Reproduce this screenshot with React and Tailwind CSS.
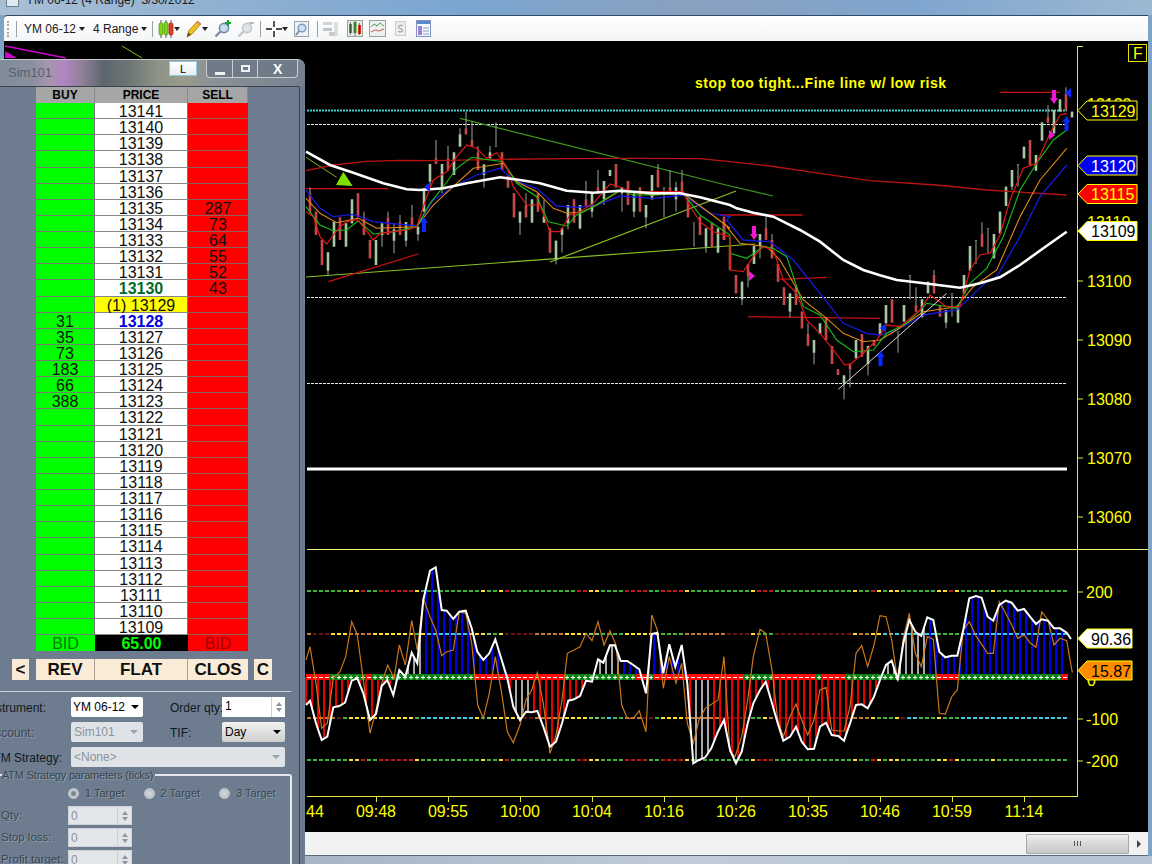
import React from 'react';

// chart drawing coordinates were read off 3x crops, so each helper maps a crop back to page pixels
const at = (bx, by) => (pts) => pts.map(([x, y]) => [bx + x / 3, by + y / 3]);
const z3 = at(300, 100);
const z4 = at(720, 40);
const z5 = at(300, 550);
const z6 = at(720, 550);
const line = (pts) => pts.map((p) => p.map((n) => n.toFixed(1)).join(',')).join(' ');

const candlesA = [
  [30,280,335,262,340,'r'],[48,335,405,335,405,'r'],[66,420,495,420,495,'r'],[84,457,512,457,525,'g'],[102,365,440,365,440,'g'],[120,352,420,352,420,'r'],[138,370,440,370,440,'g'],[156,298,370,298,370,'g'],[174,280,352,280,352,'r'],[192,352,405,335,405,'r'],[210,420,475,420,475,'r'],[228,420,495,420,495,'g'],[246,370,405,370,440,'g'],[264,352,405,335,405,'r'],[282,388,422,370,460,'g'],[300,366,405,345,405,'r'],[318,366,422,366,440,'g'],[336,352,380,315,380,'r'],[354,380,403,380,422,'g'],[372,265,335,265,335,'g'],[390,192,245,192,265,'g'],[408,175,192,120,192,'r'],[426,192,265,192,280,'g'],[444,175,212,138,212,'r'],[462,157,225,157,225,'g'],[480,103,140,85,140,'g'],[498,85,103,35,103,'r'],[516,120,140,65,140,'r'],[534,157,210,138,210,'r'],[552,193,225,193,263,'g'],[570,157,175,138,175,'g'],[588,138,139,67,140,'g'],[606,157,210,157,210,'r'],[624,228,263,228,263,'r'],[642,280,352,280,352,'r'],[660,335,368,335,405,'g'],[678,315,352,280,352,'r'],[696,298,368,298,368,'g'],[714,280,335,280,335,'r'],[732,350,368,298,368,'g'],[750,385,458,385,458,'r'],[768,422,478,422,493,'g'],[786,385,405,385,458,'g'],[804,315,370,315,388,'g'],[822,298,368,298,368,'r'],[840,315,386,315,386,'g'],[858,298,318,243,318,'r'],[876,280,335,280,352,'g'],[894,262,280,210,280,'r'],[912,243,298,243,315,'g'],[930,210,228,210,228,'g'],[948,192,262,192,262,'r'],[966,262,280,262,335,'g'],[984,243,315,243,315,'r'],[1002,280,335,280,352,'g'],[1020,262,335,262,335,'r'],[1038,315,352,315,385,'g'],[1056,225,298,225,298,'g'],[1074,210,262,192,262,'r'],[1092,262,263,262,352,'g'],[1110,262,280,210,280,'r'],[1128,262,298,245,335,'g'],[1146,245,280,210,280,'r'],[1164,298,352,298,352,'r'],[1182,368,369,368,440,'g'],[1200,350,405,350,405,'r'],[1218,385,440,385,458,'g'],[1236,368,440,368,440,'r'],[1254,385,458,385,458,'g'],[1272,368,420,368,420,'r'],
];
const candlesB = [
  [12,530,600,530,600,'r'],[30,618,690,618,690,'r'],[48,705,760,705,760,'r'],[66,725,778,725,795,'g'],[84,672,708,672,742,'r'],[102,618,672,618,672,'g'],[120,582,618,582,655,'g'],[138,565,600,530,600,'r'],[156,600,655,582,655,'r'],[174,672,725,672,725,'r'],[192,742,795,742,795,'r'],[210,760,815,760,833,'g'],[228,742,795,742,795,'r'],[246,815,865,815,865,'r'],[264,882,918,850,918,'r'],[282,900,938,900,973,'g'],[300,850,882,850,882,'g'],[318,832,900,832,900,'r'],[336,918,972,918,972,'r'],[354,988,1005,988,1005,'r'],[372,1006,1030,1006,1078,'g'],[390,973,988,973,1042,'r'],[408,900,955,900,955,'g'],[426,882,950,882,950,'r'],[444,918,972,918,1006,'g'],[462,900,918,900,918,'r'],[480,850,882,850,882,'g'],[498,795,850,795,850,'g'],[516,778,848,778,848,'r'],[534,875,876,875,938,'g'],[552,795,845,795,845,'g'],[570,705,706,705,778,'g'],[588,795,815,742,815,'r'],[606,778,832,778,832,'g'],[624,725,760,725,760,'g'],[642,705,760,690,760,'r'],[660,795,830,795,830,'r'],[678,810,848,810,865,'g'],[696,760,761,760,830,'g'],[714,795,848,795,848,'g'],[732,705,760,705,760,'g'],[750,618,692,618,692,'g'],[768,600,601,600,672,'g'],[786,582,620,547,620,'r'],[804,565,566,565,640,'g'],[822,582,655,582,655,'g'],[840,515,580,515,580,'g'],[858,440,498,440,498,'g'],[876,390,440,390,450,'g'],[894,372,373,372,440,'g'],[912,320,355,320,355,'g'],[930,300,375,300,375,'r'],[948,345,392,345,392,'g'],[966,247,302,247,302,'g'],[984,232,248,195,248,'r'],[1002,210,280,210,280,'g'],[1020,178,215,178,215,'g'],[1038,160,212,142,212,'r'],[1056,215,232,215,232,'g'],
];

const maWhite = [...z3([[18,155],[90,195],[160,218],[250,250],[320,268],[360,270],[430,265],[500,250],[600,232],[660,240],[720,250],[800,272],[880,278],[960,272],[1060,280],[1140,280],[1200,292],[1290,315]]), ...z4([[50,505],[100,518],[160,530],[240,570],[300,605],[370,660],[430,690],[480,706],[530,720],[600,728],[720,743],[780,730],[840,712],[900,675],[970,625],[1040,575]])];
const maRedLong = [...z3([[18,212],[100,195],[200,184],[300,181],[400,182],[600,178],[800,176],[1000,175],[1200,176],[1290,185]]), ...z4([[150,378],[300,400],[450,422],[650,435],[800,450],[1040,465]])];
const emaRed = [...z3([[18,335],[40,350],[60,410],[80,432],[100,405],[120,380],[140,365],[170,358],[195,385],[220,420],[240,400],[280,395],[320,390],[350,380],[380,290],[400,240],[440,215],[470,170],[500,135],[530,145],[560,175],[590,158],[620,200],[640,260],[680,315],[720,315],[750,395],[780,395],[810,345],[840,335],[880,310],[930,252],[960,262],[1000,275],[1060,275],[1150,275],[1165,310],[1200,365],[1240,395],[1290,410]]), ...z4([[30,690],[70,695],[100,650],[130,620],[160,630],[190,720],[230,760],[260,840],[300,880],[340,930],[375,975],[395,970],[430,940],[470,900],[500,855],[540,860],[600,810],[630,765],[680,800],[720,800],[750,690],[780,645],[810,640],[840,585],[870,480],[910,385],[950,370],[990,280],[1020,225],[1040,220]])];
const emaGreen = [...z3([[18,320],[60,375],[100,392],[140,390],[175,362],[220,402],[280,395],[350,380],[390,310],[430,260],[470,205],[515,172],[570,180],[610,185],[650,250],[710,290],[745,365],[800,378],[830,345],[880,320],[960,270],[1000,285],[1060,285],[1150,280],[1200,345],[1290,405]]), ...z4([[30,640],[80,655],[130,620],[160,625],[200,650],[250,800],[300,825],[350,900],[400,935],[460,930],[500,880],[560,850],[620,790],[710,805],[750,730],[800,685],[850,590],[900,450],[950,370],[1000,300],[1040,270]])];
const emaOrange = [...z3([[18,295],[60,340],[110,368],[175,355],[230,385],[350,380],[400,315],[470,250],[520,205],[580,195],[610,190],[650,245],[710,275],[760,325],[800,340],[850,335],[890,315],[960,272],[1060,285],[1150,280],[1210,325],[1290,385]]), ...z4([[20,560],[60,610],[140,620],[180,660],[250,780],[320,835],[370,880],[430,905],[480,900],[530,870],[610,815],[710,800],[760,740],[830,690],[900,530],[960,420],[1040,325]])];
const emaBlue = [...z3([[18,270],[60,325],[100,350],[160,343],[220,365],[350,378],[400,300],[470,255],[530,225],[600,205],[640,240],[710,265],[770,318],[830,322],[890,315],[960,288],[1060,295],[1150,285],[1230,340],[1290,350]]), ...z4([[20,540],[70,600],[150,605],[220,660],[300,760],[370,850],[440,880],[480,885],[530,870],[610,825],[710,810],[800,725],[830,710],[900,590],[960,470],[1040,375]])];

const cci = [...z5([[18,465],[30,452],[48,520],[65,570],[82,560],[100,472],[118,468],[135,458],[155,392],[172,385],[190,430],[210,510],[228,492],[245,408],[262,390],[280,435],[298,360],[316,380],[335,308],[352,340],[370,150],[390,62],[407,52],[425,180],[440,182],[460,207],[478,185],[497,182],[515,235],[532,305],[550,330],[568,310],[586,268],[605,330],[622,385],[640,470],[660,510],[678,485],[695,487],[712,483],[730,530],[750,590],[768,575],[786,520],[805,452],[822,448],[840,438],[858,392],[876,395],[894,328],[910,338],[930,286],[945,286],[962,333],[982,333],[1000,345],[1018,358],[1038,430],[1055,252],[1072,248],[1090,370],[1108,283],[1126,350],[1145,285],[1162,400],[1180,640],[1197,630],[1216,622],[1234,595],[1254,545],[1272,510]]), ...z6([[30,600],[48,640],[65,605],[83,520],[100,460],[120,420],[137,395],[156,460],[173,520],[190,572],[210,560],[228,530],[245,575],[263,598],[282,596],[300,530],[318,518],[335,555],[355,558],[372,572],[390,520],[408,465],[425,463],[443,475],[462,440],[480,390],[498,345],[515,332],[533,390],[550,280],[568,210],[586,245],[604,258],[622,202],[640,210],[658,305],[676,322],[695,317],[712,317],[730,240],[748,145],[768,138],[785,143],[803,200],[820,212],[838,165],[857,152],[875,158],[893,182],[912,177],[930,200],[948,222],[965,208],[984,212],[1002,235],[1020,235],[1040,248],[1053,267]])];
const cciSlow = [...z5([[18,330],[30,290],[48,400],[65,535],[82,520],[100,385],[120,365],[137,320],[155,215],[172,255],[190,390],[210,550],[228,480],[245,400],[263,345],[282,385],[298,285],[316,345],[335,212],[352,300],[370,145],[390,200],[407,240],[425,317],[440,305],[460,300],[478,185],[497,190],[515,280],[533,465],[550,505],[568,430],[586,320],[605,430],[622,545],[640,578],[660,525],[678,450],[695,420],[712,368],[730,460],[750,610],[768,555],[786,450],[802,310],[822,300],[840,290],[858,250],[876,272],[894,215],[912,285],[930,242],[948,285],[965,465],[982,505],[1000,505],[1018,482],[1038,545],[1055,195],[1072,240],[1090,415],[1108,320],[1128,400],[1145,340],[1162,520],[1180,580],[1197,510],[1216,475],[1254,450],[1272,320]]), ...z6([[30,605],[45,620],[65,560],[83,450],[100,320],[120,238],[137,250],[156,360],[173,510],[190,560],[210,500],[228,462],[245,510],[263,555],[282,510],[300,420],[318,412],[335,540],[355,543],[372,543],[390,470],[408,310],[425,287],[443,350],[462,285],[480,197],[498,200],[515,270],[533,395],[550,265],[568,190],[586,310],[604,350],[622,260],[640,268],[658,490],[676,492],[695,440],[712,420],[730,240],[748,215],[768,258],[785,283],[803,310],[820,310],[838,155],[857,190],[875,225],[893,265],[912,255],[930,278],[948,292],[965,185],[984,210],[1002,285],[1020,265],[1040,272],[1057,368]])];

const G = '#3cb43c', Y = '#ffe030', R = '#c01818', O = '#c87830', D = '#6a1010', C = '#40c8e0', L = '#80c880';
const r5 = (arr) => arr.map(([e, c]) => [300 + e / 3, c]);
const r6 = (arr) => arr.map(([e, c]) => [720 + e / 3, c]);
const run200 = [...r5([[145,G],[180,Y],[200,R],[235,G],[340,R],[360,Y],[545,G],[560,Y],[595,G],[612,Y],[630,R],[830,G],[865,R],[900,Y],[975,G],[1045,R],[1080,G],[1155,R],[1170,Y],[1260,G]]), ...r6([[92,G],[110,Y],[162,R],[398,G],[415,Y],[452,G],[470,R],[488,Y],[505,G],[540,Y],[650,G],[685,Y],[703,R],[720,Y],[810,G],[828,Y],[1070,G]])];
const run100 = [...r5([[40,O],[90,D],[150,Y],[220,O],[340,Y],[360,G],[375,Y],[510,C],[560,Y],[580,L],[600,G],[615,Y],[700,D],[790,O],[860,Y],[900,L],[980,G],[1080,Y],[1150,G],[1260,O]]), ...r6([[15,O],[90,D],[110,Y],[165,G],[398,D],[420,Y],[450,O],[490,Y],[650,C],[720,G],[1070,C]])];
const runM100 = [...r5([[100,O],[130,D],[150,G],[340,Y],[360,G],[520,C],[535,Y],[560,G],[580,L],[660,Y],[700,D],[800,O],[870,Y],[900,L],[920,G],[940,C],[975,G],[1035,O],[1060,D],[1080,G],[1160,Y],[1260,O]]), ...r6([[90,D],[130,G],[145,Y],[165,O],[400,D],[450,O],[470,Y],[520,G],[540,Y],[560,D],[600,C],[650,G],[668,Y],[720,G],[1070,C]])];
const zeroRuns = [...r5([[90,'r'],[200,'g'],[218,'r'],[522,'g'],[795,'r'],[1010,'g'],[1040,'r'],[1060,'g'],[1260,'r']]), ...r6([[72,'r'],[160,'g'],[288,'r'],[305,'g'],[378,'r'],[648,'g'],[720,'r'],[1026,'g'],[1070,'r']])];

const ticks = [];
for (let x = 307; x < 1065; x += 6) ticks.push(x);
const runAt = (runs, x) => (runs.find((r) => r[0] > x + 2) || runs[runs.length - 1])[1];

const cciY = (x) => {
  for (let i = 0; i < cci.length - 1; i++) {
    const [x0, y0] = cci[i];
    const [x1, y1] = cci[i + 1];
    if (x >= x0 && x <= x1) return y0 + ((y1 - y0) * (x - x0)) / (x1 - x0);
  }
  return 677;
};
const inRange = (x, list) => list.some(([a, b]) => x >= a && x < b);
const barColor = (x, y) => {
  if (inRange(x, [[421, 425], [529, 533], [619, 623], [709, 713], [925, 929]])) return '#ffff00';
  if (y < 677) return inRange(x, [[405, 421], [597, 619], [888, 925]]) ? '#a8a8a8' : '#0000e6';
  return inRange(x, [[511, 529], [691, 709]]) ? '#a8a8a8' : '#e60000';
};
const bars = [];
for (let x = 306; x < 1068; x += 6) bars.push(x);

function DashRow({ y, runs }) {
  return (
    <g>
      {ticks.map((x) => (
        <rect key={x} x={x} y={y - 1} width="4" height="2" fill={runAt(runs, x)} />
      ))}
    </g>
  );
}

function Tag({ y, w = 50, fill, color, label }) {
  const h = 9.5;
  const x = 1087;
  return (
    <g>
      <polygon points={`1078,${y} ${x},${y - h} ${x + w},${y - h} ${x + w},${y + h} ${x},${y + h}`} fill={fill} stroke="#ffff00" strokeWidth="1" />
      <text x={x + 4} y={y + 6} fontSize="16" fill={color}>{label}</text>
    </g>
  );
}

function Chart() {
  const axis = [[13100, 281], [13090, 340], [13080, 399], [13070, 458], [13060, 517]];
  const times = [[376, '09:48'], [448, '09:55'], [520, '10:00'], [592, '10:04'], [664, '10:16'], [736, '10:26'], [808, '10:35'], [880, '10:46'], [952, '10:59'], [1024, '11:14']];
  const indic = [[592, '200'], [719, '-100'], [761, '-200']];
  const up = (x, y) => `${x},${y - 8} ${x + 4},${y - 2} ${x + 2},${y - 2} ${x + 2},${y + 7} ${x - 2},${y + 7} ${x - 2},${y - 2} ${x - 4},${y - 2}`;
  const down = (x, y) => `${x},${y + 7} ${x + 4},${y + 1} ${x + 2},${y + 1} ${x + 2},${y - 7} ${x - 2},${y - 7} ${x - 2},${y + 1} ${x - 4},${y + 1}`;

  return (
    <svg className="block w-[1144px] h-[791px] bg-black" viewBox="4 41 1144 791">
      {/* stray drawing objects behind the order window */}
      <line x1="5" y1="46" x2="66" y2="58" stroke="#d000d0" strokeWidth="1.5" />
      <polygon points="5,51 17,58 5,58" fill="#d000d0" />
      <line x1="122" y1="46" x2="142" y2="58" stroke="#7fc020" />

      <line x1="307" y1="110.5" x2="1067" y2="110.5" stroke="#40d0d0" strokeWidth="2" strokeDasharray="2 1" />
      {[124.5, 297.5, 383.5].map((y) => (
        <line key={y} x1="307" y1={y} x2="1067" y2={y} stroke="#e8e8e8" strokeDasharray="3 1" />
      ))}
      <line x1="307" y1="469" x2="1067" y2="469" stroke="#fff" strokeWidth="3" />

      <polyline points={line(z3([[18,172],[110,232]]))} stroke="#80b020" fill="none" />
      <polyline points={line(z3([[480,55],[1290,258]]))} stroke="#3f9a20" fill="none" strokeWidth="1.2" />
      <polyline points={line([[306, 277], [755, 244]])} stroke="#88c020" fill="none" strokeWidth="1.2" />
      <polyline points={line([[550, 262], [736, 191]])} stroke="#88c020" fill="none" strokeWidth="1.2" />
      <polyline points={line([[730, 186], [773, 196]])} stroke="#3f9a20" fill="none" strokeWidth="1.2" />
      <polygon points={line(z3([[108,255],[130,215],[158,258]]))} fill="#7de000" />

      {[[[18,266],[265,266]], [[85,545],[355,462]]].map((p, i) => (
        <polyline key={i} points={line(z3(p))} stroke="#c81010" fill="none" strokeWidth="1.3" />
      ))}
      {[[[840,157],[1020,157]], [[0,525],[248,525]], [[180,718],[320,712]], [[85,830],[480,835]]].map((p, i) => (
        <polyline key={i} points={line(z4(p))} stroke="#c81010" fill="none" strokeWidth="1.3" />
      ))}

      {[...candlesA.map((c) => [300 + c[0] / 3, ...c.slice(1, 5).map((v) => 100 + v / 3), c[5]]), ...candlesB.map((c) => [720 + c[0] / 3, ...c.slice(1, 5).map((v) => 40 + v / 3), c[5]])].map(([x, t, b, wt, wb, k], i) => (
        <g key={i}>
          <line x1={x} y1={wt} x2={x} y2={wb} stroke="#9aa89a" />
          <rect x={x - 1.3} y={t} width="2.6" height={b - t} fill={k === 'r' ? '#c84848' : '#a8c8a4'} />
        </g>
      ))}

      <polyline points={line(maRedLong)} stroke="#b81414" strokeWidth="1.3" fill="none" />
      <polyline points={line(emaBlue)} stroke="#1818e0" strokeWidth="1.3" fill="none" />
      <polyline points={line(emaOrange)} stroke="#e08a18" strokeWidth="1.1" fill="none" />
      <polyline points={line(emaGreen)} stroke="#18c018" strokeWidth="1.1" fill="none" />
      <polyline points={line(emaRed)} stroke="#e01818" strokeWidth="1.2" fill="none" />
      <polyline points={line(maWhite)} stroke="#fff" strokeWidth="2.6" fill="none" />
      <polyline points={line(z4([[355,1048],[680,760]]))} stroke="#d8d8d8" fill="none" />

      <polygon points={up(424, 225)} fill="#0a28ff" />
      <polygon points={up(880.5, 359)} fill="#0a28ff" />
      <polygon points={up(1066.5, 124)} fill="#0a28ff" />
      <polygon points="424,187 430,182 430,192" fill="#0a28ff" />
      <polygon points="880,328 886,323 886,333" fill="#0a28ff" />
      <polygon points="1065,93 1071,88 1071,98" fill="#0a28ff" />
      <polygon points={down(754, 233)} fill="#f018d0" />
      <polygon points={down(1054, 97)} fill="#f018d0" />
      <polygon points="749,271 755,276 749,281" fill="#f018d0" />
      <polygon points="1049,130 1055,135 1049,140" fill="#f018d0" />

      <text x="695" y="88" fontSize="14" fontWeight="700" fill="#ffff00" letterSpacing="0.5">stop too tight...Fine line w/ low risk</text>

      {/* price axis */}
      <polyline points="1083,46.5 1077.5,46.5 1077.5,797" stroke="#e8e840" fill="none" />
      <rect x="1128.5" y="44.5" width="18" height="17" fill="none" stroke="#e8e000" />
      <text x="1133" y="59" fontSize="16" fill="#ffff00">F</text>
      {axis.map(([p, y]) => (
        <g key={p}>
          <line x1="1077" y1={y} x2="1083" y2={y} stroke="#e8e840" />
          <text x="1087" y={y + 6} fontSize="16" fill="#ffff00">{p}</text>
        </g>
      ))}
      <text x="1087" y="110" fontSize="16" fill="#ffff00">13130</text>
      <text x="1087" y="228" fontSize="16" fill="#ffff00">13110</text>
      <Tag y={110.5} fill="#000" color="#ffff00" label="13129" />
      <Tag y={165.5} fill="#0000f0" color="#fff" label="13120" />
      <Tag y={194} fill="#ff0000" color="#ffff00" label="13115" />
      <Tag y={231} fill="#fff" color="#000" label="13109" />

      {/* CCI panel */}
      <line x1="307" y1="549.5" x2="1148" y2="549.5" stroke="#f0f070" />
      {bars.map((x) => {
        const y = cciY(x);
        return <rect key={x} x={x - 1} y={Math.min(y, 677)} width="2" height={Math.abs(y - 677)} fill={barColor(x, y)} />;
      })}
      <DashRow y={591} runs={run200} />
      <DashRow y={634} runs={run100} />
      <DashRow y={718} runs={runM100} />
      <DashRow y={760} runs={run200} />
      {ticks.map((x) => (
        <rect key={x} x={x - 1} y="674" width="6" height="6" fill={runAt(zeroRuns, x) === 'g' ? '#0a8010' : '#ff0808'} />
      ))}
      {ticks.map((x) =>
        runAt(zeroRuns, x) === 'g' ? (
          <path key={x} d={`M${x} 677.5h4M${x + 2} 675.5v4`} stroke="#fff" strokeWidth="1" fill="none" />
        ) : (
          <rect key={x} x={x} y="677" width="4" height="1" fill="#fff" />
        )
      )}
      <polyline points={line(cciSlow)} stroke="#c8761e" strokeWidth="1.2" fill="none" />
      <polyline points={line(cci)} stroke="#fff" strokeWidth="2" fill="none" />

      {indic.map(([y, t]) => (
        <g key={t}>
          <line x1="1077" y1={y} x2="1083" y2={y} stroke="#e8e840" />
          <text x="1086" y={y + 6} fontSize="16" fill="#ffff00">{t}</text>
        </g>
      ))}
      <text x="1087" y="686" fontSize="16" fill="#ffff00">0</text>
      <Tag y={638.5} w={45} fill="#fff" color="#000" label="90.36" />
      <Tag y={670.5} w={45} fill="#ff8c00" color="#000" label="15.87" />

      {/* time axis */}
      <line x1="307" y1="796.5" x2="1077" y2="796.5" stroke="#e8e840" />
      <text x="306" y="817" fontSize="16" fill="#ffff00">44</text>
      {times.map(([x, t]) => (
        <g key={t}>
          <line x1={x + 0.5} y1="797" x2={x + 0.5} y2="802" stroke="#e8e840" />
          <text x={x} y="817" fontSize="16" fill="#ffff00" textAnchor="middle">{t}</text>
        </g>
      ))}
    </svg>
  );
}

function Caret({ className = '' }) {
  return <span className={`inline-block w-0 h-0 border-x-[3.5px] border-x-transparent border-t-[4px] border-t-[#222] ${className}`} />;
}

function Sep() {
  return <span className="block w-px h-[16px] bg-[#9aa0a6]" />;
}

function Glass({ dim, plus, minus }) {
  return (
    <svg width="17" height="18" viewBox="0 0 17 18">
      <circle cx="10" cy="8" r="4.6" fill={dim ? '#dfe3e6' : '#c8dcee'} stroke={dim ? '#c4c8cc' : '#6f8fb0'} strokeWidth="1.6" />
      <line x1="6.5" y1="11.5" x2="1.5" y2="16.5" stroke={dim ? '#c0c4c8' : '#7f8ea0'} strokeWidth="2.4" />
      {plus && <path d="M14 0v6M11 3h6" stroke="#1aa030" strokeWidth="2" />}
      {minus && <path d="M12 3h5" stroke="#b8bcc0" strokeWidth="2" />}
    </svg>
  );
}

function Toolbar() {
  return (
    <div className="h-[26px] ml-[4px] mr-[4px] border-t border-t-[#2f4a66] bg-[linear-gradient(#ffffff,#f4f5f6)] flex items-center text-[12px] text-[#1a1a1a] rounded-tl-sm shrink-0">
      <span className="ml-[3px] w-[2px] h-[16px] border-l-2 border-dotted border-[#aaa]" />
      <span className="ml-[7px]"><Sep /></span>
      <span className="ml-[7px] w-[50px] whitespace-nowrap">YM 06-12</span>
      <Caret className="ml-[5px]" />
      <span className="ml-[8px] w-[43px] whitespace-nowrap">4 Range</span>
      <Caret className="ml-[5px]" />
      <span className="ml-[5px]"><Sep /></span>

      <svg className="ml-[5px]" width="16" height="20" viewBox="0 0 16 20">
        <path d="M3 1v18M8 1v18M13 1v18" stroke="#333" strokeWidth="0.8" />
        <rect x="1" y="4" width="4" height="12" rx="1.6" fill="#7ed321" stroke="#4a8a10" strokeWidth="0.7" />
        <rect x="6" y="3" width="4" height="13" rx="1.6" fill="#7ed321" stroke="#4a8a10" strokeWidth="0.7" />
        <rect x="11" y="4" width="4" height="12" rx="1.6" fill="#e04020" stroke="#902010" strokeWidth="0.7" />
      </svg>
      <Caret />

      <svg className="ml-[6px]" width="16" height="18" viewBox="0 0 16 18">
        <polygon points="1,17 2.5,11 11.5,1 15,4 6,14" fill="#f0c020" stroke="#a07810" strokeWidth="0.8" />
        <polygon points="11.5,1 15,4 13.4,5.8 10,2.8" fill="#e08a70" />
        <polygon points="1,17 2.5,12.5 5,14.8" fill="#5a4a20" />
      </svg>
      <Caret />
      <span className="ml-[6px] flex"><Glass plus /></span>
      <span className="ml-[6px] flex"><Glass dim minus /></span>
      <span className="ml-[6px]"><Sep /></span>

      <svg className="ml-[5px]" width="16" height="16" viewBox="0 0 16 16">
        <path d="M8 0v6M8 10v6M0 8h6M10 8h6" stroke="#111" strokeWidth="1.4" />
      </svg>
      <Caret />
      <svg className="ml-[6px]" width="15" height="16" viewBox="0 0 15 16">
        <rect x="0.5" y="0.5" width="14" height="15" fill="#eef2f6" stroke="#9aa4ae" />
        <circle cx="8" cy="7" r="3.8" fill="#cfe0f0" stroke="#7f9ab8" strokeWidth="1.4" />
        <line x1="5" y1="10" x2="2" y2="14" stroke="#7f8ea0" strokeWidth="2" />
      </svg>
      <span className="ml-[8px]"><Sep /></span>

      <svg className="ml-[5px]" width="16" height="16" viewBox="0 0 16 16">
        <rect x="0" y="1" width="9" height="3" fill="#d0d4d8" />
        <rect x="0" y="7" width="9" height="3" fill="#c0c4c8" />
        <rect x="11" y="1" width="4" height="14" fill="#dcdfe2" />
        <rect x="6" y="11" width="6" height="4" fill="#c8ccd0" />
      </svg>
      <svg className="ml-[8px]" width="16" height="17" viewBox="0 0 16 17">
        <rect x="0.5" y="0.5" width="15" height="16" fill="#e8ece8" stroke="#9aa49a" />
        <rect x="2" y="4" width="3" height="9" fill="#40a030" />
        <rect x="6.5" y="2" width="3" height="11" fill="#40a030" />
        <rect x="11" y="5" width="3" height="9" fill="#d03020" />
        <path d="M3.5 2v13M8 1v15M12.5 3v12" stroke="#333" strokeWidth="0.6" />
      </svg>
      <svg className="ml-[6px]" width="17" height="17" viewBox="0 0 17 17">
        <rect x="0.5" y="0.5" width="16" height="16" fill="#eef0ee" stroke="#9aa49a" />
        <path d="M2 7l3-3 3 2 3-3 4 3" stroke="#50a060" fill="none" />
        <path d="M2 12l4-2 4 1 5-2" stroke="#c06060" fill="none" />
      </svg>
      <svg className="ml-[9px]" width="11" height="15" viewBox="0 0 11 15">
        <rect x="0.5" y="0.5" width="10" height="14" fill="#eceeee" stroke="#c8ccd0" />
        <path d="M7.5 5C6.5 3.8 3.5 4 3.5 5.8S7.5 7.6 7.5 9.4 4.5 11.4 3.5 10" stroke="#a8acb0" strokeWidth="1.3" fill="none" />
      </svg>
      <svg className="ml-[10px]" width="15" height="17" viewBox="0 0 15 17">
        <rect x="0.5" y="0.5" width="14" height="16" fill="#f4f6fa" stroke="#7f94c0" />
        <rect x="1" y="1" width="13" height="3" fill="#5a8ac8" />
        <rect x="2" y="6" width="4" height="9" fill="#a080d8" />
        <path d="M7 8h6M7 11h6M7 14h6" stroke="#8aa0c8" />
      </svg>
    </div>
  );
}

const prices = [];
for (let p = 13141; p >= 13109; p--) prices.push(p);
const sells = { 13135: 287, 13134: 73, 13133: 64, 13132: 55, 13131: 52, 13130: 43 };
const buys = { 13128: 31, 13127: 35, 13126: 73, 13125: 183, 13124: 66, 13123: 388 };

function Ladder() {
  return (
    <div className="ml-[36px] w-[212px] grid grid-cols-[59px_93px_60px] text-[16px] leading-[17px] text-center text-[#101010]">
      {['BUY', 'PRICE', 'SELL'].map((h) => (
        <div key={h} className="h-[16px] bg-[#a6a6a6] font-bold text-[12px] leading-[16px] text-black border-r border-r-[#8a8a8a]">{h}</div>
      ))}
      {prices.map((p) => (
        <React.Fragment key={p}>
          <div className="h-[16.125px] bg-[#00ff00] border-b border-b-[#707f70] border-r border-r-[#777]">{buys[p]}</div>
          <div
            className={`h-[16.125px] border-b border-b-[#888] border-r border-r-[#777] ${p === 13129 ? 'bg-[#ffff00]' : 'bg-white'} ${p === 13130 ? 'font-bold text-[#006b2a]' : ''} ${p === 13128 ? 'font-bold text-[#0000e0]' : ''}`}
          >
            {p === 13129 ? `(1) ${p}` : p}
          </div>
          <div className="h-[16.125px] bg-[#ff0000] border-b border-b-[#8f5f5f]">{sells[p]}</div>
        </React.Fragment>
      ))}
      <div className="h-[16px] bg-[#00ff00] text-[#0a7a0a]">BID</div>
      <div className="h-[16px] bg-black text-[#00ff00] font-bold">65.00</div>
      <div className="h-[16px] bg-[#ff0000] text-[#a00000]">BID</div>
    </div>
  );
}

function Spinner() {
  return (
    <span className="ml-auto w-[14px] h-full flex flex-col items-center justify-center gap-[2px] border-l border-l-[#ccd0d4]">
      <span className="w-0 h-0 border-x-[3px] border-x-transparent border-b-[4px] border-b-[#8a96a2]" />
      <span className="w-0 h-0 border-x-[3px] border-x-transparent border-t-[4px] border-t-[#8a96a2]" />
    </span>
  );
}

function DimText({ children, className = '' }) {
  return <span className={`[text-shadow:1px_1px_0_#8f9dab] text-[#3a4550] ${className}`}>{children}</span>;
}

function FormLabel({ w, children, dim }) {
  return (
    <div className={`shrink-0 text-right whitespace-nowrap leading-[22px] text-[12px] ${w} ${dim ? 'text-[#3a4550] [text-shadow:1px_1px_0_#8f9dab]' : 'text-[#10181f]'}`}>
      <div className="float-right">{children}</div>
    </div>
  );
}

function Radio({ on, label, className }) {
  return (
    <span className={`flex items-center gap-[6px] text-[11px] ${className}`}>
      <span className="w-[11px] h-[11px] rounded-full bg-[radial-gradient(circle,#d8dce0,#aeb4ba)] border border-[#c8cdd2] flex items-center justify-center">
        {on && <span className="w-[5px] h-[5px] rounded-full bg-[#7c848c]" />}
      </span>
      <DimText>{label}</DimText>
    </span>
  );
}

function Numeric({ label }) {
  return (
    <div className="flex h-[19px] items-center">
      <DimText className="w-[68px] pl-px whitespace-nowrap text-[11.5px]">{label}</DimText>
      <div className="w-[64px] h-[19px] bg-[#e2e6e9] border border-[#d0d4d8] flex items-center pl-[2px] text-[#8a939c] text-[12px] leading-none">
        0
        <Spinner />
      </div>
    </div>
  );
}

function OrderWindow() {
  return (
    <section className="absolute left-0 top-[59px] w-[305px] h-[805px] overflow-hidden rounded-tr-[8px] bg-[#6d7d8f] border-t border-t-[#c8ccd0] text-[12px]">
      <header className="h-[26px] flex items-start bg-[linear-gradient(90deg,#7f8c99_0%,#8a8f9e_10%,#a795ae_16%,#b185c4_21%,#8f8098_27%,#5d666e_34%,#6c7574_42%,#8f9488_52%,#9a9c88_60%,#8d9397_68%,#75828e_100%)]">
        <span className="ml-[8px] mt-[6px] text-[13px] leading-[14px] text-[#56616b]">Sim101</span>
        <button className="ml-[117px] mt-px w-[28px] h-[15px] bg-[linear-gradient(#ffffff,#e8eef4)] border border-[#8fc8e8] text-[11px] leading-[12px] text-black">L</button>
        <div className="ml-[9px] w-[92px] h-[18px] flex border border-t-0 border-[#c8ced4] rounded-b-[4px] bg-[#6f7b86] text-white">
          <span className="w-[26px] border-r border-r-[#c8ced4] flex items-end justify-center pb-[2px]"><span className="w-[10px] h-[3px] bg-[#eef0f2]" /></span>
          <span className="w-[25px] border-r border-r-[#c8ced4] flex items-center justify-center"><span className="w-[9px] h-[7px] border-2 border-[#eef0f2]" /></span>
          <span className="flex-1 flex items-center justify-center text-[14px] font-bold leading-none">X</span>
        </div>
      </header>

      <div className="mr-[5px] border-t border-r border-[#39434e] rounded-tr-[2px] h-full">
        <Ladder />

        <div className="mt-[8px] flex h-[21px] text-[17px] font-bold leading-[21px] text-center text-[#111]">
          <div className="ml-[12px] w-[17px] bg-[#faebd7]">&lt;</div>
          <div className="ml-[7px] w-[59px] bg-[#faebd7] border-r border-r-[#a89c8c]">REV</div>
          <div className="w-[93px] bg-[#faebd7] border-r border-r-[#a89c8c]">FLAT</div>
          <div className="w-[60px] bg-[#faebd7]">CLOS</div>
          <div className="ml-[6px] w-[18px] bg-[#faebd7]">C</div>
        </div>

        <div className="mt-[11px] w-[291px] h-px bg-[#c8d0d8]" />

        <div className="mt-[5px] flex h-[20px]">
          <FormLabel w="w-[46px]">Instrument:</FormLabel>
          <div className="ml-[25px] w-[72px] h-[20px] bg-white rounded-[2px] flex items-center pl-[2px] text-black">
            YM 06-12
            <span className="ml-auto mr-[4px] w-0 h-0 border-x-[4px] border-x-transparent border-t-[4px] border-t-black" />
          </div>
          <span className="ml-[27px] w-[50px] leading-[22px] whitespace-nowrap text-[#10181f]">Order qty:</span>
          <div className="ml-[2px] w-[63px] h-[20px] bg-white flex items-center pl-[3px] text-black">
            <span className="-mt-[3px]">1</span>
            <Spinner />
          </div>
        </div>

        <div className="mt-[5px] flex h-[20px]">
          <FormLabel w="w-[34px]" dim>Account:</FormLabel>
          <div className="ml-[37px] w-[72px] h-[20px] bg-[#dfe3e7] rounded-[2px] flex items-center pl-[3px] text-[#8a939c]">
            Sim101
            <span className="ml-auto mr-[5px] w-0 h-0 border-x-[4px] border-x-transparent border-t-[4px] border-t-[#9aa3ac]" />
          </div>
          <span className="ml-[27px] w-[52px] leading-[22px] text-[#10181f]">TIF:</span>
          <div className="w-[63px] h-[20px] rounded-[2px] bg-[linear-gradient(#f2f2f2,#cfcfcf)] flex items-center pl-[3px] text-black">
            Day
            <span className="ml-auto mr-[4px] w-0 h-0 border-x-[4px] border-x-transparent border-t-[4px] border-t-black" />
          </div>
        </div>

        <div className="mt-[5px] flex h-[20px]">
          <FormLabel w="w-[62px]">ATM Strategy:</FormLabel>
          <div className="ml-[9px] w-[214px] h-[20px] bg-[#dfe3e7] rounded-[2px] flex items-center pl-[3px] text-[#8a939c]">
            &lt;None&gt;
            <span className="ml-auto mr-[5px] w-0 h-0 border-x-[4px] border-x-transparent border-t-[4px] border-t-[#9aa3ac]" />
          </div>
        </div>

        <fieldset className="mt-px w-[292px] border-t-2 border-r-2 border-[#e4e8ec] rounded-tr-[3px]">
          <legend className="ml-[2px] pr-[2px] text-[11px] tracking-[-0.2px] leading-[14px]"><DimText>ATM Strategy parameters (ticks)</DimText></legend>
          <div className="mt-[4px] h-[14px] flex items-center">
            <Radio on label="1 Target" className="ml-[68px]" />
            <Radio label="2 Target" className="ml-[19px]" />
            <Radio label="3 Target" className="ml-[19px]" />
          </div>
          <div className="mt-[6px] flex flex-col gap-[3px]">
            <Numeric label="Qty:" />
            <Numeric label="Stop loss:" />
            <Numeric label="Profit target:" />
          </div>
        </fieldset>
      </div>
    </section>
  );
}

export default function App() {
  return (
    <div className="relative w-[1152px] h-[864px] overflow-hidden flex flex-col bg-[#7fa3c4] [font-family:'Liberation_Sans',Arial,sans-serif]">
      <div className="h-[15px] shrink-0 overflow-hidden bg-[linear-gradient(90deg,#a9bfd4_0%,#8fb0d2_20%,#7aa6d0_40%,#8aa0c0_60%,#7fa6cf_80%,#9db8d2_100%)] flex items-start text-[12px] leading-[15px] text-[#1a1a1a] pl-[6px]">
        <span className="w-[13px] h-[7px] bg-[#dfe8ef] border border-t-0 border-[#6a8090]" />
        <span className="ml-[7px] -mt-[7px] whitespace-pre">YM 06-12 (4 Range)  3/30/2012</span>
      </div>
      <Toolbar />
      <div className="px-[4px] shrink-0">
        <Chart />
      </div>
      <div className="mx-[4px] h-[24px] shrink-0 bg-[#f2f2f2] flex items-center justify-end border-b border-b-[#5a6a78]">
        <div className="w-[103px] h-[20px] mr-[8px] rounded-[1px] border border-[#a8a8a8] bg-[linear-gradient(#f0f0f0,#d8d8d8_50%,#c8c8c8)] flex items-center justify-center gap-px">
          <span className="w-px h-[5px] bg-[#555]" />
          <span className="w-px h-[5px] bg-[#555] ml-px" />
          <span className="w-px h-[5px] bg-[#555] ml-px" />
        </div>
        <span className="mr-[7px] w-0 h-0 border-y-[4px] border-y-transparent border-l-[4px] border-l-[#444]" />
      </div>
      <div className="flex-1 bg-[linear-gradient(90deg,#8fa4b8,#a8b8c8_30%,#c0ccd8_60%,#b4c4d4)]" />
      <OrderWindow />
    </div>
  );
}
